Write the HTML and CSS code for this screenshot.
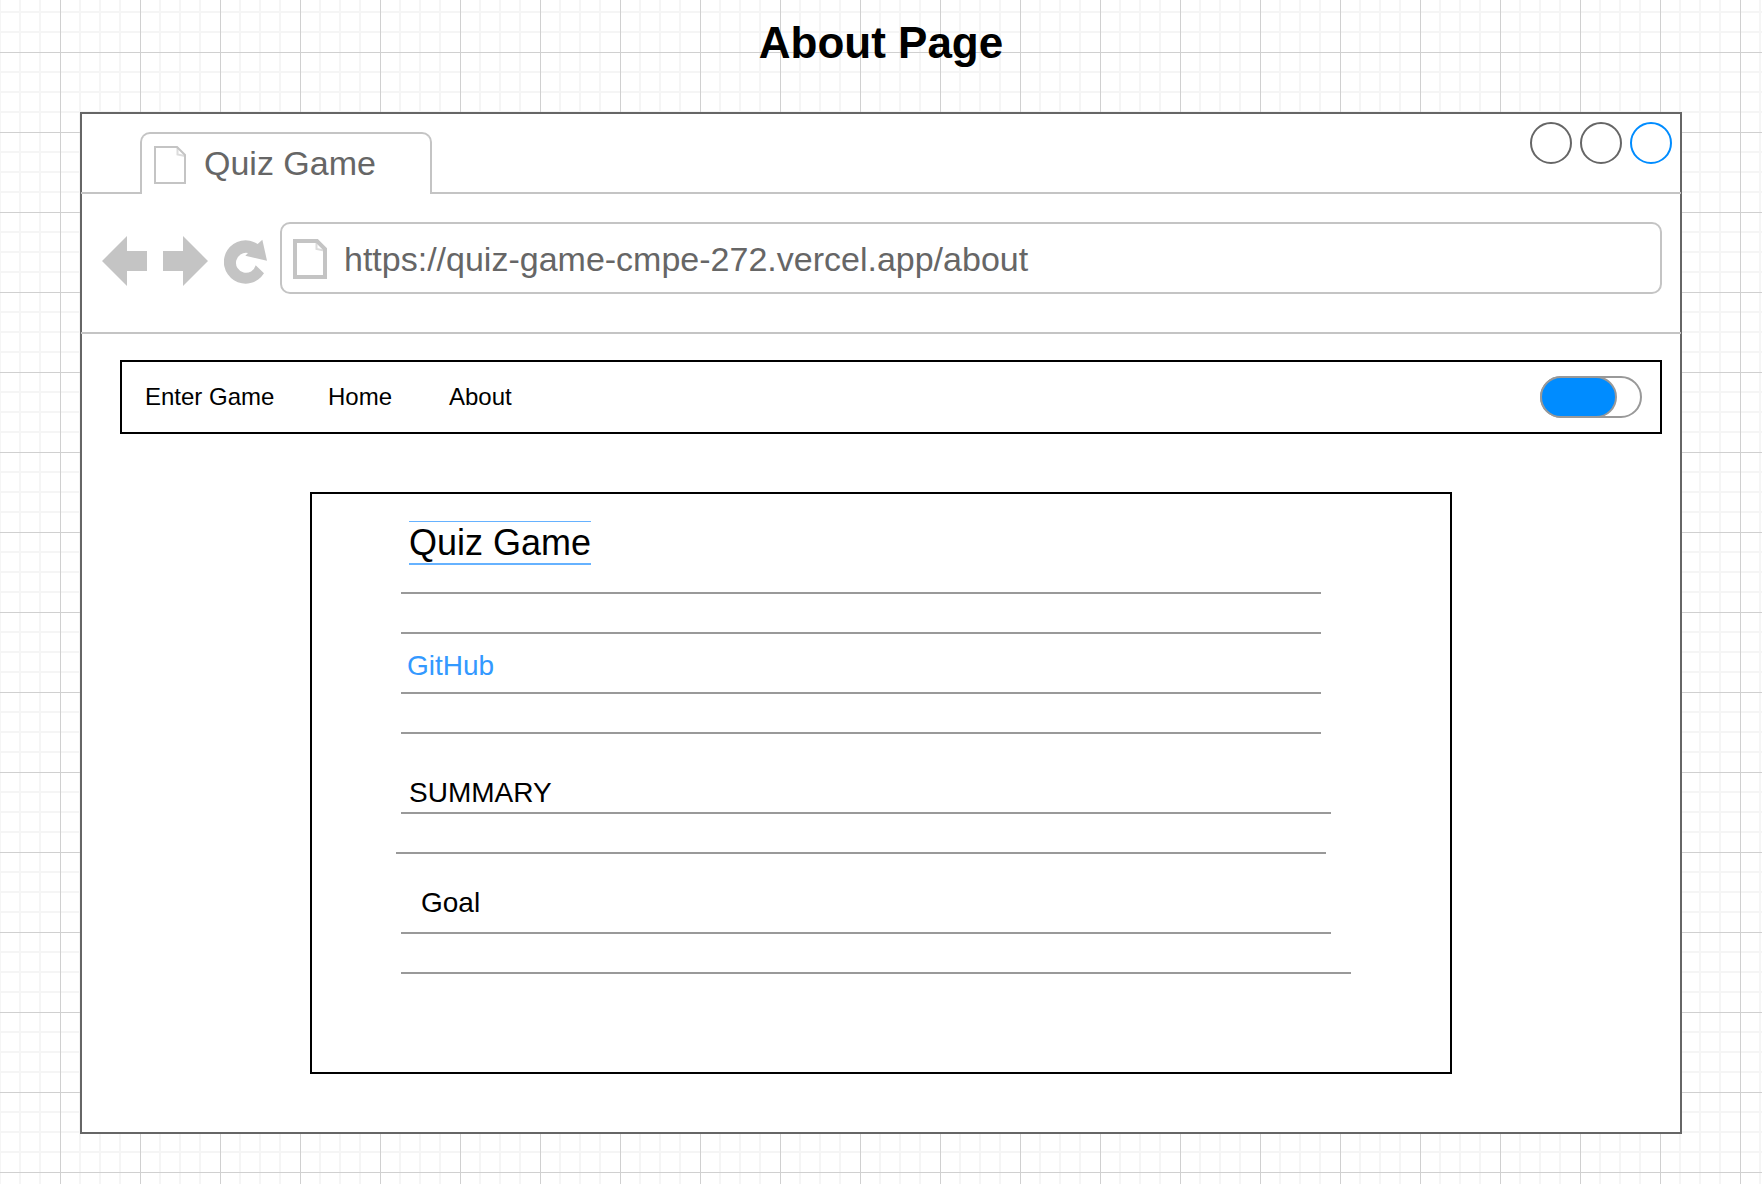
FILE: index.html
```html
<!DOCTYPE html>
<html lang="en">
<head>
<meta charset="utf-8">
<meta name="viewport" content="width=device-width, initial-scale=1">
<title>About Page</title>
<link rel="stylesheet" href="styles.css">
</head>
<body>
<h1 class="page-title">About Page</h1>

<div class="browser">
  <div class="tab-strip">
    <div class="tab">
      <svg class="tab-icon" viewBox="0 0 32 38" aria-hidden="true">
        <path d="M23.500 1V8.500L31 10" fill="none" stroke="#dcdcdc" stroke-width="2"/>
        <path d="M1 1H23L31 9V37H1Z" fill="none" stroke="#c4c4c4" stroke-width="2"/>
      </svg>
      <span class="tab-label">Quiz Game</span>
    </div>
    <div class="window-buttons">
      <button class="window-button" type="button" aria-label="Minimize"></button>
      <button class="window-button" type="button" aria-label="Maximize"></button>
      <button class="window-button window-button-close" type="button" aria-label="Close"></button>
    </div>
  </div>

  <div class="toolbar">
    <div class="history">
      <button class="tool" type="button" aria-label="Back">
        <svg width="45" height="50" viewBox="0 0 45 50"><path d="M0 25L25 0V15H45V35H25V50Z" fill="#c4c4c4"/></svg>
      </button>
      <button class="tool" type="button" aria-label="Forward">
        <svg width="45" height="50" viewBox="0 0 45 50"><path d="M45 25L20 0V15H0V35H20V50Z" fill="#c4c4c4"/></svg>
      </button>
      <button class="tool" type="button" aria-label="Reload">
        <svg width="43" height="50" viewBox="0 0 129 150"><path d="M101 24A65 65 0 1 0 120 112L95 88A30 30 0 1 1 72 51L64 59L129 74L115 11Z" fill="#c4c4c4"/></svg>
      </button>
    </div>
    <label class="address">
      <svg class="address-icon" viewBox="0 0 34 40" aria-hidden="true">
        <path d="M23.500 3V10L31 11.500" fill="none" stroke="#dcdcdc" stroke-width="2"/>
        <path d="M2 2H24L32 10V38H2Z" fill="none" stroke="#c4c4c4" stroke-width="4"/>
      </svg>
      <input class="address-input" type="text" aria-label="Address" value="https://quiz-game-cmpe-272.vercel.app/about">
    </label>
  </div>

  <nav class="site-nav">
    <div class="nav-links">
      <a href="#game">Enter Game</a>
      <a href="#home">Home</a>
      <a href="#about">About</a>
    </div>
    <input class="toggle" type="checkbox" role="switch" aria-label="Theme">
  </nav>

  <main class="card">
    <h2 class="card-title">Quiz Game</h2>
    <hr class="rule rule-first">
    <hr class="rule">
    <p class="entry entry-link"><a href="#github">GitHub</a></p>
    <hr class="rule">
    <hr class="rule">
    <h3 class="entry entry-summary">SUMMARY</h3>
    <hr class="rule rule-wide">
    <hr class="rule rule-outdent">
    <h3 class="entry entry-goal">Goal</h3>
    <hr class="rule rule-wide">
    <hr class="rule rule-full">
  </main>
</div>
</body>
</html>
```
FILE: styles.css
```css
*,
*::before {
  box-sizing: border-box;
}

body {
  margin: 0;
  min-height: 100vh;
  display: flow-root;
  padding-bottom: 50px;
  color: #000;
  font-family: "Liberation Sans", Arial, sans-serif;
  background-color: #fff;
  /* graph paper: strong lines every 80px, faint ones every 20px */
  background-image:
    linear-gradient(to right, #d0d0d0 1px, transparent 1px),
    linear-gradient(to bottom, #d0d0d0 1px, transparent 1px),
    linear-gradient(to right, transparent 19px, #f5f5f5 19px 21px, transparent 21px 39px, #f5f5f5 39px 41px, transparent 41px 59px, #f5f5f5 59px 61px, transparent 61px),
    linear-gradient(to bottom, transparent 19px, #f5f5f5 19px 21px, transparent 21px 39px, #f5f5f5 39px 41px, transparent 41px 59px, #f5f5f5 59px 61px, transparent 61px);
  background-size: 80px 80px;
  background-position: 60px 52px;
}

.page-title {
  margin: 18px 0 44px;
  font-size: 44px;
  line-height: 50px;
  text-align: center;
}

.browser {
  margin: 0 80px;
  padding-bottom: 58px;
  border: 2px solid #666;
  background: #fff;
}

.tab-strip {
  display: flex;
  justify-content: space-between;
  align-items: flex-start;
  margin: 0 -1px;
  padding: 8px 9px 0 59px;
  border-bottom: 2px solid #c4c4c4;
}

.tab {
  display: flex;
  align-items: center;
  gap: 18px;
  width: 292px;
  height: 62px;
  margin: 10px 0 -2px;
  padding: 2px 0 0 12px;
  border: 2px solid #c4c4c4;
  border-bottom: 0;
  border-radius: 10px 10px 0 0;
  background: #fff;
  color: #666;
  font-size: 34px;
  line-height: 40px;
}

.tab-icon {
  width: 32px;
  height: 38px;
}

.tab-label {
  padding-bottom: 4px;
}

.window-buttons {
  display: flex;
  gap: 8px;
}

.window-button {
  width: 42px;
  height: 42px;
  padding: 0;
  border: 2px solid #666;
  border-radius: 50%;
  background: #fff;
}

.window-button-close {
  border-color: #008cff;
}

.toolbar {
  display: flex;
  align-items: center;
  gap: 13px;
  margin: 0 -1px;
  padding: 28px 19px 38px 21px;
  border-bottom: 2px solid #c4c4c4;
}

.history {
  display: flex;
  gap: 16px;
  padding-top: 6px;
}

.tool {
  padding: 0;
  border: 0;
  background: none;
}

.tool svg {
  display: block;
}

.address {
  flex: 1;
  display: flex;
  align-items: center;
  gap: 17px;
  height: 72px;
  padding: 2px 0 0 11px;
  border: 2px solid #c4c4c4;
  border-radius: 10px;
}

.address-icon {
  width: 34px;
  height: 40px;
}

.address-input {
  flex: 1;
  min-width: 0;
  height: 40px;
  padding: 0;
  border: 0;
  outline: 0;
  background: none;
  color: #666;
  font-family: inherit;
  font-size: 34px;
}

.site-nav {
  display: flex;
  justify-content: space-between;
  align-items: center;
  height: 74px;
  margin: 26px 18px 0 38px;
  padding: 0 18px 0 23px;
  border: 2px solid #000;
}

.nav-links {
  display: grid;
  grid-template-columns: 183px 121px auto;
  font-size: 24px;
  line-height: 30px;
}

.nav-links a {
  color: inherit;
  text-decoration: none;
}

.toggle {
  appearance: none;
  width: 102px;
  height: 42px;
  margin: 0;
  border: 2px solid #999;
  border-radius: 21px;
  background: #fff;
}

.toggle::before {
  content: "";
  display: block;
  width: 77px;
  height: 42px;
  margin: -2px;
  border: 2px solid #999;
  border-radius: 21px;
  background: #008cff;
}

.card {
  margin: 58px 228px 0;
  padding: 27px 99px 98px 84px;
  border: 2px solid #000;
}

.card-title {
  width: fit-content;
  margin: 0 0 0 13px;
  border-top: 1px solid #66b2ff;
  border-bottom: 2px solid #66b2ff;
  font-size: 36px;
  font-weight: 400;
  line-height: 41px;
}

.rule {
  height: 2px;
  margin: 38px 30px 0 5px;
  border: 0;
  background: #999;
}

.rule-first {
  margin-top: 27px;
}

.rule-wide {
  margin-right: 20px;
}

.rule-outdent {
  margin-left: 0;
  margin-right: 25px;
}

.rule-full {
  margin-right: 0;
}

.entry {
  margin: 0;
  font-size: 28px;
  font-weight: 400;
  line-height: 32px;
}

.entry + .rule {
  margin-top: 0;
}

.entry-link {
  padding: 16px 0 10px 11px;
}

.entry-link a {
  color: #3399ff;
  text-decoration: none;
}

.entry-summary {
  padding: 43px 0 3px 13px;
}

.entry-goal {
  padding: 33px 0 13px 25px;
}
```
